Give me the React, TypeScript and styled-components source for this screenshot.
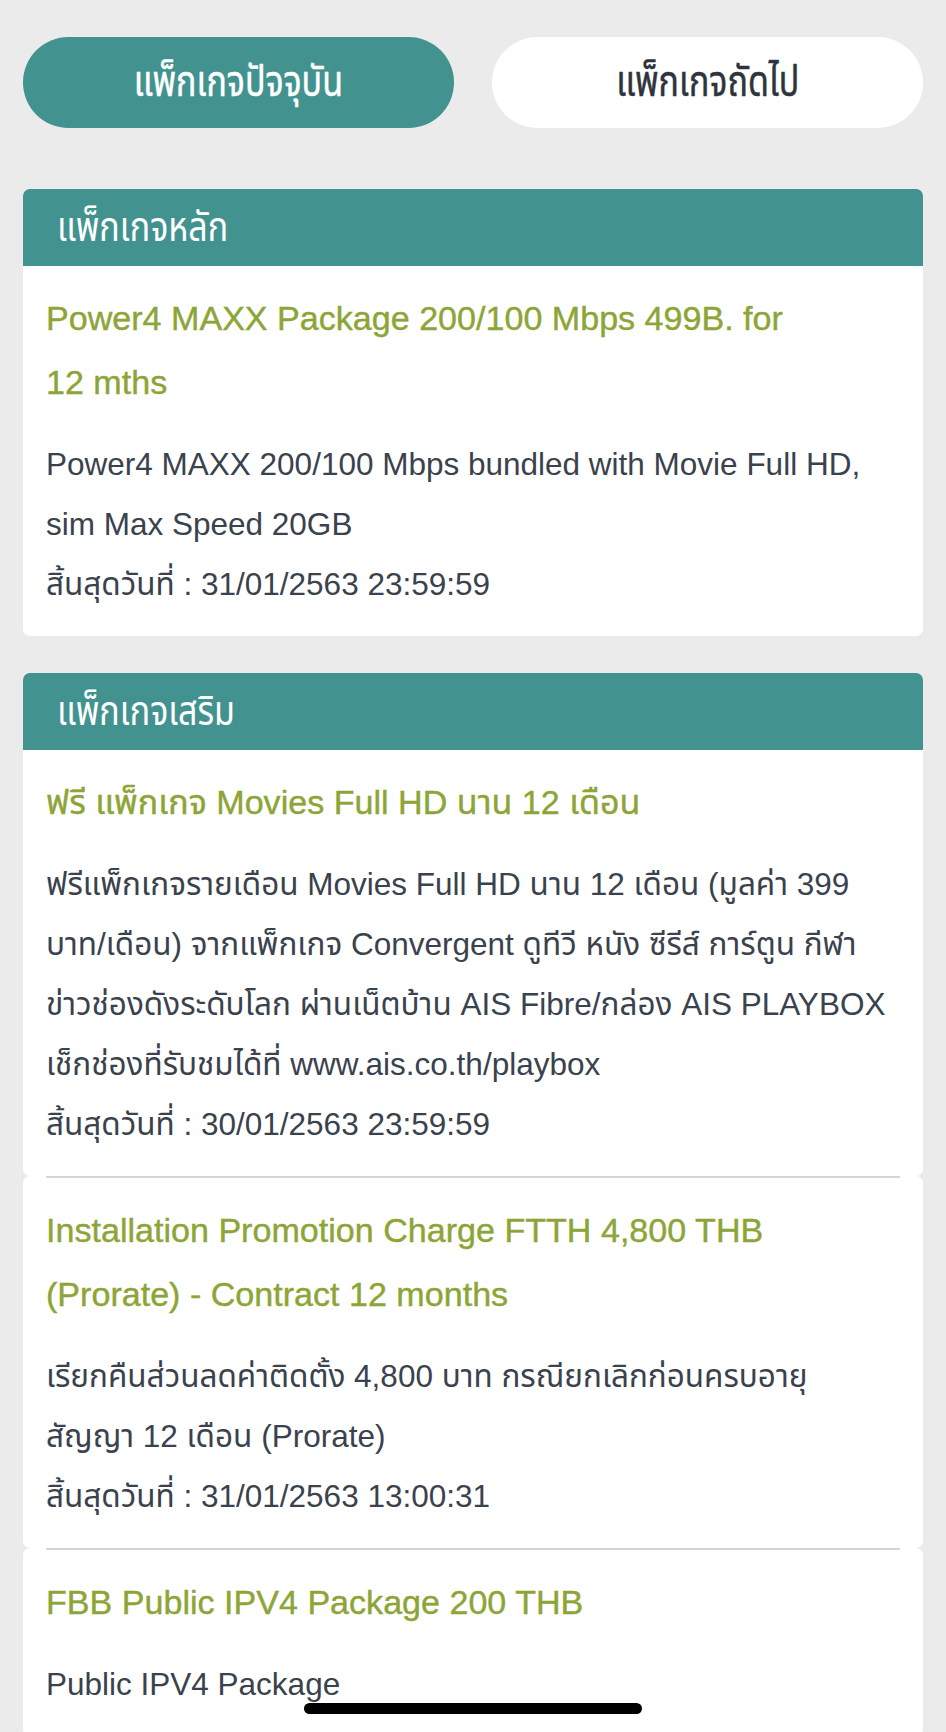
import React from "react";
import styled, { createGlobalStyle } from "styled-components";

const TEAL = "#42938f";
const GREEN = "#8ca536";
const TEXT = "#3a424d";
const FONT = `"Liberation Sans", "Noto Sans Thai", "Noto Sans Thai UI", "Noto Sans", "DejaVu Sans", sans-serif`;

const Global = createGlobalStyle`
  html, body {
    margin: 0;
    padding: 0;
    overflow: hidden;
    background: #ebebeb;
  }
  * { box-sizing: border-box; }
`;

const Page = styled.div`
  position: relative;
  height: 1732px;
  overflow: hidden;
  background: #ebebeb;
  padding: 37px 23px 0;
  font-family: ${FONT};
`;

const Tabs = styled.div`
  display: grid;
  grid-template-columns: 1fr 1fr;
  gap: 38px;
`;

const Tab = styled.button<{ $active?: boolean }>`
  height: 91px;
  border: none;
  border-radius: 46px;
  background: ${(p) => (p.$active ? TEAL : "#ffffff")};
  color: ${(p) => (p.$active ? "#ffffff" : "#2e343c")};
  -webkit-text-stroke: 0.5px ${(p) => (p.$active ? "#ffffff" : "#2e343c")};
  font-family: ${FONT};
  font-size: 43px;
  padding: 0;
  cursor: pointer;
  display: flex;
  align-items: center;
  justify-content: center;
  overflow: hidden;
`;

const Condensed = styled.span<{ $scale: number; $origin?: string }>`
  display: inline-block;
  white-space: nowrap;
  transform: scaleX(${(p) => p.$scale});
  transform-origin: ${(p) => p.$origin ?? "center"};
`;

const Sections = styled.div`
  display: flex;
  flex-direction: column;
  gap: 37px;
  margin-top: 61px;
`;

const Section = styled.section`
  display: flex;
  flex-direction: column;
`;

const SectionHeader = styled.div`
  height: 77px;
  background: ${TEAL};
  border-radius: 7px 7px 0 0;
  display: flex;
  align-items: center;
  padding-left: 34px;
  color: #ffffff;
  font-size: 41px;
`;

const Item = styled.div<{ $first?: boolean }>`
  background: #ffffff;
  padding: 0 23px 22px;
  border-radius: ${(p) => (p.$first ? "0 0 7px 7px" : "7px")};
`;

const Divider = styled.div`
  height: 2px;
  background: #d5d5d5;
`;

const Title = styled.div`
  color: ${GREEN};
  font-size: 34.1px;
  line-height: 64px;
  white-space: pre;
  margin: 20px 0;
  -webkit-text-stroke: 0.4px ${GREEN};
`;

const Desc = styled.div`
  color: ${TEXT};
  font-size: 31.5px;
  line-height: 60px;
  white-space: pre;
`;

const HomeIndicator = styled.div`
  position: absolute;
  left: 50%;
  bottom: 18px;
  width: 338px;
  height: 11px;
  margin-left: -169px;
  border-radius: 6px;
  background: #000000;
`;

type Pkg = { title: string; desc: string };

const main: Pkg[] = [
  {
    title: "Power4 MAXX Package 200/100 Mbps 499B. for\n12 mths",
    desc:
      "Power4 MAXX 200/100 Mbps bundled with Movie Full HD,\nsim Max Speed 20GB\nสิ้นสุดวันที่ : 31/01/2563 23:59:59",
  },
];

const extras: Pkg[] = [
  {
    title: "ฟรี แพ็กเกจ Movies Full HD นาน 12 เดือน",
    desc:
      "ฟรีแพ็กเกจรายเดือน Movies Full HD นาน 12 เดือน (มูลค่า 399\nบาท/เดือน) จากแพ็กเกจ Convergent ดูทีวี หนัง ซีรีส์ การ์ตูน กีฬา\nข่าวช่องดังระดับโลก ผ่านเน็ตบ้าน AIS Fibre/กล่อง AIS PLAYBOX\nเช็กช่องที่รับชมได้ที่ www.ais.co.th/playbox\nสิ้นสุดวันที่ : 30/01/2563 23:59:59",
  },
  {
    title: "Installation Promotion Charge FTTH 4,800 THB\n(Prorate) - Contract 12 months",
    desc:
      "เรียกคืนส่วนลดค่าติดตั้ง 4,800 บาท กรณียกเลิกก่อนครบอายุ\nสัญญา 12 เดือน (Prorate)\nสิ้นสุดวันที่ : 31/01/2563 13:00:31",
  },
  {
    title: "FBB Public IPV4 Package 200 THB",
    desc: "Public IPV4 Package",
  },
];

function PackageSection({ heading, items }: { heading: string; items: Pkg[] }) {
  return (
    <Section>
      <SectionHeader>
        <Condensed $scale={0.83} $origin="left center">
          {heading}
        </Condensed>
      </SectionHeader>
      {items.map((it, i) => (
        <Item key={i} $first={i === 0}>
          {i > 0 && <Divider />}
          <Title>{it.title}</Title>
          <Desc>{it.desc}</Desc>
        </Item>
      ))}
    </Section>
  );
}

export default function App() {
  return (
    <>
      <Global />
      <Page>
        <Tabs>
          <Tab $active>
            <Condensed $scale={0.79}>แพ็กเกจปัจจุบัน</Condensed>
          </Tab>
          <Tab>
            <Condensed $scale={0.79}>แพ็กเกจถัดไป</Condensed>
          </Tab>
        </Tabs>
        <Sections>
          <PackageSection heading="แพ็กเกจหลัก" items={main} />
          <PackageSection heading="แพ็กเกจเสริม" items={extras} />
        </Sections>
        <HomeIndicator />
      </Page>
    </>
  );
}
